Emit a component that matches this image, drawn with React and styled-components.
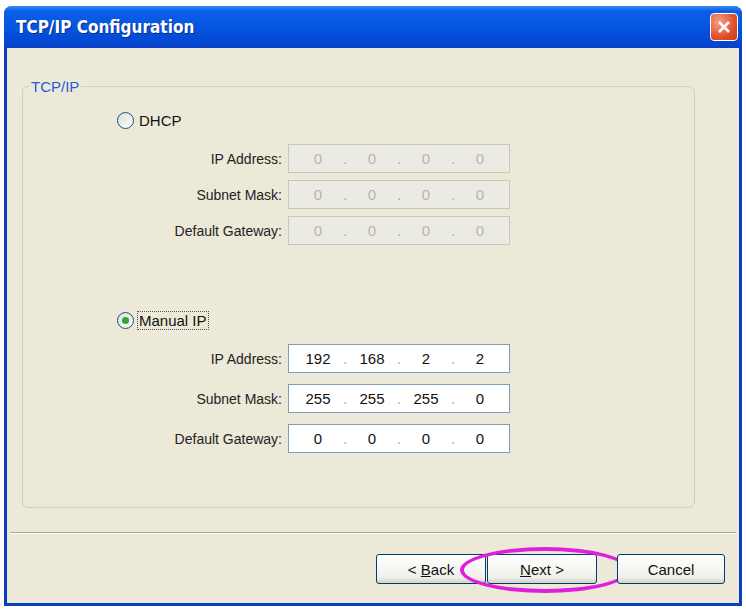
import React from 'react';
import styled, { createGlobalStyle } from 'styled-components';

const Global = createGlobalStyle`
  html, body { margin: 0; background: #fff; }
  body { font-family: "Liberation Sans Narrow", "Liberation Sans", Arial, sans-serif; }
`;

const Page = styled.div`
  padding: 6px 4px 0 4px;
  width: 746px;
  box-sizing: border-box;
`;

const Window = styled.div`
  width: 738px;
  height: 600px;
  display: flex;
  flex-direction: column;
  border: 3px solid #0a3fc4;
  border-top: none;
  border-radius: 8px 8px 0 0;
  box-sizing: border-box;
  background: #ece9d8;
`;

const TitleBar = styled.div`
  height: 42px;
  margin: 0 -3px;
  border-radius: 8px 8px 0 0;
  background: linear-gradient(#3a8cf5 0%, #0a5fe6 12%, #0555e0 50%, #0348d2 85%, #0a3fc4 100%);
  display: flex;
  align-items: center;
  justify-content: space-between;
  padding: 0 4px 0 12px;
  color: #fff;
  font-family: "DejaVu Sans Condensed", "Liberation Sans", sans-serif;
  font-weight: bold;
  font-size: 17px;
  text-shadow: 1px 1px 0 #0a2a8a;
`;

const Close = styled.div`
  width: 26px;
  height: 26px;
  border: 1px solid #fff;
  border-radius: 4px;
  background: radial-gradient(circle at 30% 30%, #f4a08a, #e0502c 60%, #c43a1a);
  display: flex;
  align-items: center;
  justify-content: center;
  text-shadow: none;
`;

const Body = styled.div`
  flex: 1;
  display: flex;
  flex-direction: column;
  padding: 30px 44px 0 15px;
`;

const Group = styled.fieldset`
  margin: 0;
  height: 430px;
  box-sizing: border-box;
  border: 1px solid #d0d0bf;
  border-radius: 6px;
  padding: 0;
  legend {
    color: #2a5bd7;
    font-size: 15px;
    padding: 0 2px;
    margin-left: 6px;
  }
`;

const Inner = styled.div`
  padding-left: 94px;
`;

const Radio = styled.div`
  display: flex;
  align-items: center;
  gap: 3px;
  font-size: 15px;
  color: #111;
  margin-top: ${p => p.top}px;
  span { border: ${p => (p.focus ? '1px dotted #555' : '1px solid transparent')}; padding: 0 1px; }
`;

const Dot = styled.div`
  width: 15px;
  height: 15px;
  border-radius: 50%;
  border: 1px solid #1c5180;
  background: linear-gradient(135deg, #dcdcd6, #fff);
  display: flex;
  align-items: center;
  justify-content: center;
  &::after {
    content: '';
    width: 7px;
    height: 7px;
    border-radius: 50%;
    background: ${p => (p.on ? '#2fa62f' : 'transparent')};
  }
`;

const Rows = styled.div`
  display: flex;
  flex-direction: column;
  gap: ${p => p.gap}px;
  margin-top: ${p => p.top}px;
`;

const Row = styled.div`
  display: flex;
  align-items: center;
  gap: 6px;
`;

const Label = styled.div`
  width: 165px;
  text-align: right;
  font-size: 14px;
  color: #222;
`;

const Field = styled.div`
  width: 222px;
  height: 29px;
  box-sizing: border-box;
  border: 1px solid ${p => (p.dis ? '#c9c7ba' : '#7f9db9')};
  background: ${p => (p.dis ? '#ecebe3' : '#fff')};
  display: flex;
  align-items: center;
  justify-content: space-between;
  padding: 0 14px 0 14px;
  font-size: 15px;
  color: ${p => (p.dis ? '#b8b6a8' : '#111')};
`;

const Oct = styled.span`
  width: 30px;
  text-align: center;
`;

const Dt = styled.span`
  color: #aaa;
`;

const Sep = styled.div`
  margin: 24px -41px 0 -12px;
  border-top: 1px solid #aca899;
  border-bottom: 1px solid #fff;
`;

const Buttons = styled.div`
  display: flex;
  justify-content: flex-end;
  margin-top: 20px;
  margin-right: -30px;
`;

const Btn = styled.div`
  width: ${p => p.w}px;
  height: 30px;
  margin-left: ${p => p.ml}px;
  box-sizing: border-box;
  border: 1px solid #003c74;
  border-radius: 3px;
  background: linear-gradient(#ffffff, #f0f0ea 80%, #d6d0c5);
  display: flex;
  align-items: center;
  justify-content: center;
  font-size: 15px;
  color: #111;
  position: relative;
`;

const Ring = styled.div`
  position: absolute;
  left: -28px;
  top: -8px;
  width: 170px;
  height: 46px;
  border: 4px solid #e020d8;
  border-radius: 50%;
  box-sizing: border-box;
  pointer-events: none;
`;

const ip = (vals, dis) => (
  <Field dis={dis}>
    {vals.map((v, i) => (
      <React.Fragment key={i}>
        {i > 0 && <Dt>.</Dt>}
        <Oct>{v}</Oct>
      </React.Fragment>
    ))}
  </Field>
);

const Block = ({ rows, dis, top, gap }) => (
  <Rows top={top} gap={gap}>
    {rows.map(([l, v]) => (
      <Row key={l}><Label>{l}</Label>{ip(v, dis)}</Row>
    ))}
  </Rows>
);

export default function App() {
  const zero = ['0', '0', '0', '0'];
  return (
    <Page>
      <Global />
      <Window>
        <TitleBar>
          TCP/IP Configuration
          <Close>
            <svg width="14" height="14" viewBox="0 0 14 14"><path d="M2 2L12 12M12 2L2 12" stroke="#fff" strokeWidth="2.6" /></svg>
          </Close>
        </TitleBar>
        <Body>
          <Group>
            <legend>TCP/IP</legend>
            <Inner>
              <Radio top={16}><Dot /><span>DHCP</span></Radio>
              <Block dis top={14} gap={7} rows={[['IP Address:', zero], ['Subnet Mask:', zero], ['Default Gateway:', zero]]} />
              <Radio top={66} focus><Dot on /><span>Manual IP</span></Radio>
              <Block top={14} gap={11} rows={[['IP Address:', ['192', '168', '2', '2']], ['Subnet Mask:', ['255', '255', '255', '0']], ['Default Gateway:', zero]]} />
            </Inner>
          </Group>
          <Sep />
          <Buttons>
            <Btn w={110} ml={0}>&lt;&nbsp;<u>B</u>ack</Btn>
            <Btn w={110} ml={1}><u>N</u>ext &gt;<Ring /></Btn>
            <Btn w={108} ml={20}>Cancel</Btn>
          </Buttons>
        </Body>
      </Window>
    </Page>
  );
}
